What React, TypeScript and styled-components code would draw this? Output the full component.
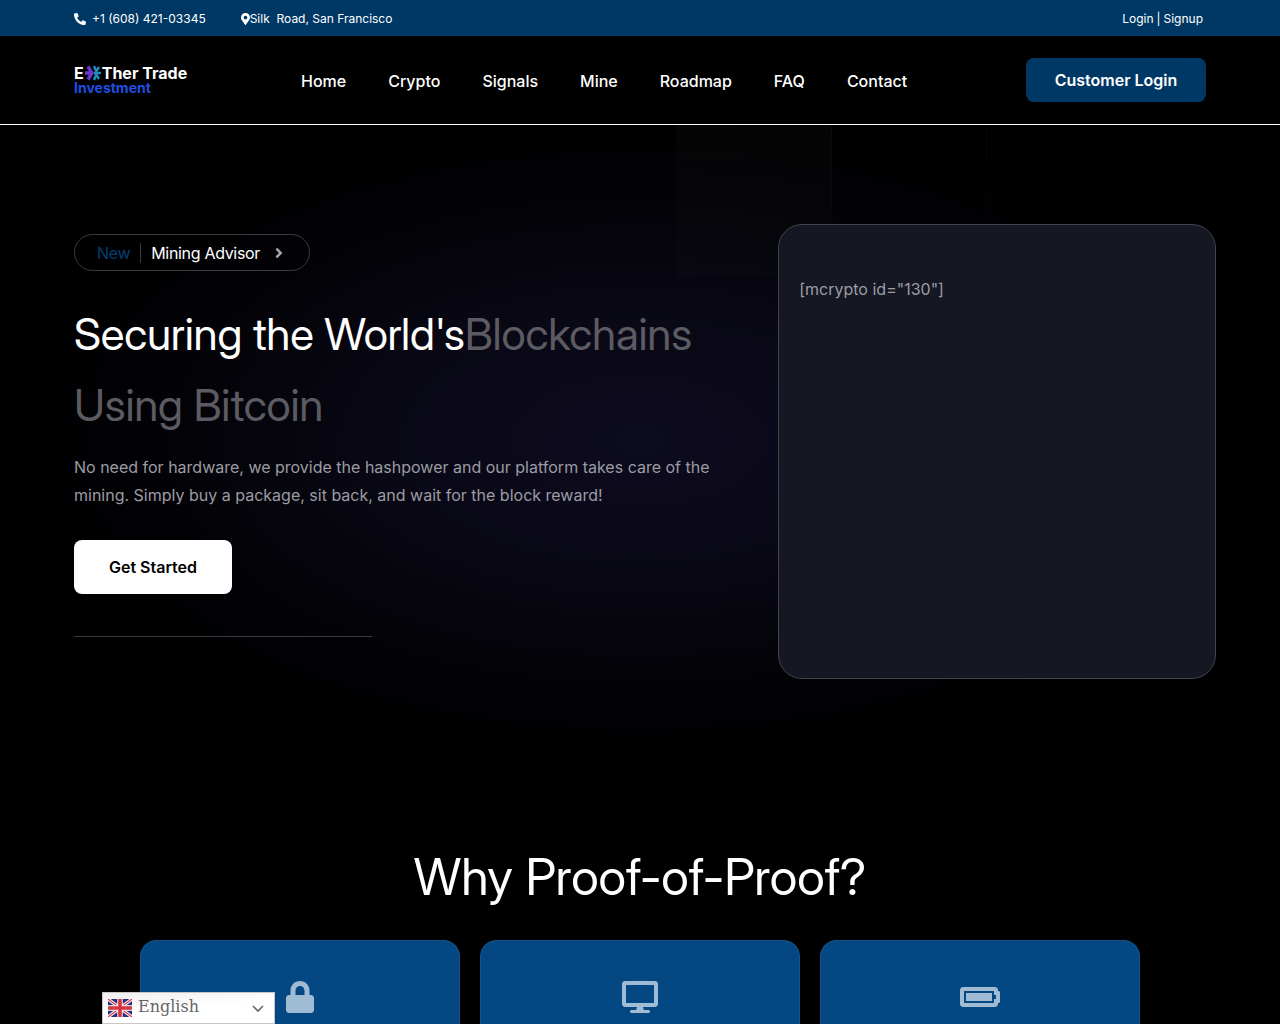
import React from "react";
import styled, { createGlobalStyle } from "styled-components";
import {
  FaAngleRight,
  FaBatteryFull,
  FaDesktop,
  FaLock,
  FaMapMarkerAlt,
  FaPhoneAlt,
} from "react-icons/fa";

const GlobalStyle = createGlobalStyle`
  *, *::before, *::after { box-sizing: border-box; }
  body {
    margin: 0;
    background: #000;
    color: #fff;
    font-family: Inter, "Liberation Sans", sans-serif;
    font-size: 16px;
  }
  h1, h2, p, ul { margin: 0; padding: 0; font-weight: 400; }
  a { color: inherit; text-decoration: none; }
`;

const TopBar = styled.div`
  display: flex;
  align-items: center;
  gap: 35px;
  height: 36px;
  padding: 2px 77px 0 74px;
  background: #003865;
  font-size: 12px;
  line-height: 20px;
`;

const ContactItem = styled.a<{ $gap: number; $icon: number }>`
  display: flex;
  align-items: center;
  gap: ${(p) => p.$gap}px;
  white-space: pre;

  svg {
    width: ${(p) => p.$icon}px;
    height: 12px;
  }
`;

const Account = styled.div`
  display: flex;
  gap: 3px;
  margin-left: auto;
`;

const Header = styled.header`
  display: flex;
  align-items: center;
  height: 89px;
  padding: 0 74px;
  border-bottom: 1px solid #fff;
`;

const Brand = styled.a`
  display: block;
  flex: 0 0 227px;
  font-weight: 700;
  color: #fff;
`;

const BrandName = styled.span`
  display: flex;
  align-items: center;
  font-size: 16px;
  line-height: 16px;
`;

const BrandSub = styled.span`
  display: block;
  color: #1f4fe0;
  font-size: 14px;
  line-height: 14px;
`;

const Menu = styled.ul`
  display: flex;
  gap: 42px;
  padding-top: 2px;
  list-style: none;
  font-weight: 500;
  line-height: 20px;
`;

const LoginButton = styled.button`
  width: 180px;
  height: 44px;
  margin-left: auto;
  border: 0;
  border-radius: 8px;
  background: #003865;
  color: #fff;
  font: 600 16px/20px Inter, sans-serif;
`;

const Hero = styled.section`
  display: grid;
  grid-template-columns: 62fr 38fr;
  align-items: start;
  padding: 99px 5% 151px;
  background:
    linear-gradient(#ffffff0a, #ffffff04) 831px 0 / 1px 152px no-repeat,
    linear-gradient(#ffffff06, #ffffff02) 986px 0 / 1px 152px no-repeat,
    linear-gradient(#ffffff04, #ffffff02) 676px 0 / 155px 152px no-repeat,
    radial-gradient(ellipse 640px 330px at 50% 315px, #0d0b1f 0%, #090815 38%, #030308 70%, #000 100%);
`;

const Intro = styled.div`
  display: flex;
  flex-direction: column;
  align-items: flex-start;
  padding: 10px 10px 0;
`;

const Pill = styled.a`
  display: flex;
  align-items: center;
  height: 37px;
  padding: 0 22px;
  border: 1px solid #3a3a3d;
  border-radius: 20px;
  letter-spacing: -0.02em;
`;

const PillTag = styled.span`
  padding-right: 10px;
  border-right: 1px solid #3a3a3d;
  margin-right: 10px;
  color: #003f72;
`;

const Arrow = styled(FaAngleRight)`
  margin-left: 11px;
  color: #a5a5ab;
`;

const Title = styled.h1`
  margin-top: 28px;
  font-family: "Inter Display", Inter, sans-serif;
  font-size: 44px;
  font-variation-settings: "opsz" 32;
  line-height: 71px;
  letter-spacing: -0.005em;
`;

const Muted = styled.span`
  color: #5c5b61;
`;

const Lead = styled.p`
  margin-top: 12px;
  color: #9c9ca3;
  line-height: 28px;
`;

const StartButton = styled.button`
  width: 158px;
  height: 54px;
  margin-top: 31px;
  border: 0;
  border-radius: 8px;
  background: #fff;
  color: #000;
  font: 600 16px/20px Inter, sans-serif;
`;

const Divider = styled.hr`
  width: 298px;
  margin: 42px 0 0;
  border: 0;
  border-top: 1px solid #3a3a3e;
`;

const Panel = styled.aside`
  min-height: 455px;
  padding: 50px 20px;
  border: 1px solid #42434b;
  border-radius: 24px;
  background: #151722;
  color: #9c9da4;
  line-height: 28px;
`;

const Why = styled.section`
  height: 194px;
  padding: 18px 10px 0;
  overflow: hidden;
`;

const WhyTitle = styled.h2`
  font-family: "Inter Display", Inter, sans-serif;
  font-size: 50px;
  font-variation-settings: "opsz" 32;
  line-height: 58px;
  text-align: center;
`;

const Cards = styled.div`
  display: grid;
  grid-template-columns: repeat(3, 1fr);
  gap: 20px;
  max-width: 1000px;
  margin: 34px auto 0;
`;

const Card = styled.article<{ $icon: number }>`
  display: flex;
  align-items: flex-start;
  justify-content: center;
  min-height: 280px;
  padding: 40px 20px;
  border: 1px solid #165389;
  border-radius: 16px;
  background: #034783;
  color: #a0bbd4;

  svg {
    width: ${(p) => p.$icon}px;
    height: 32px;
  }
`;

const Translator = styled.label`
  position: fixed;
  left: 102px;
  bottom: 0;
  display: block;
`;

const Language = styled.select`
  display: block;
  width: 173px;
  height: 32px;
  padding: 0 0 2px 35px;
  border: 1px solid #c6c6c6;
  border-radius: 0;
  appearance: none;
  background: linear-gradient(175deg, #efefef, #fff 50%);
  color: #666;
  font: 16px/20px "DejaVu Serif", serif;
`;

const Flag = styled.svg`
  position: absolute;
  left: 6px;
  top: 7px;
`;

const Chevron = styled.svg`
  position: absolute;
  right: 11px;
  top: 13px;
`;

const links = ["Home", "Crypto", "Signals", "Mine", "Roadmap", "FAQ", "Contact"];

function BrandMark() {
  return (
    <svg width="18" height="16" viewBox="0 0 18 16" fill="none">
      <path d="M1 8h7M4 1.500 8 8l-4 6.500" stroke="#6b35cf" strokeWidth="3.400" />
      <path d="M17 8h-5M10 1l1.500 4M10 15l1.500-4M15 2l-4 6 4 6" stroke="#208fbd" strokeWidth="2.400" />
    </svg>
  );
}

export default function App() {
  return (
    <>
      <GlobalStyle />
      <TopBar>
        <ContactItem href="#phone" $gap={6} $icon={12}>
          <FaPhoneAlt />
          +1 (608) 421-03345
        </ContactItem>
        <ContactItem href="#map" $gap={0} $icon={9}>
          <FaMapMarkerAlt />
          {"Silk  Road, San Francisco"}
        </ContactItem>
        <Account>
          <a href="#login">Login</a>|<a href="#signup">Signup</a>
        </Account>
      </TopBar>
      <Header>
        <Brand href="#home">
          <BrandName>
            E<BrandMark />Ther Trade
          </BrandName>
          <BrandSub>Investment</BrandSub>
        </Brand>
        <nav>
          <Menu>
            {links.map((name) => (
              <li key={name}>
                <a href={`#${name.toLowerCase()}`}>{name}</a>
              </li>
            ))}
          </Menu>
        </nav>
        <LoginButton>Customer Login</LoginButton>
      </Header>
      <main>
        <Hero>
          <Intro>
            <Pill href="#advisor">
              <PillTag>New</PillTag>
              Mining Advisor
              <Arrow />
            </Pill>
            <Title>
              Securing the World's<Muted>Blockchains Using Bitcoin</Muted>
            </Title>
            <Lead>
              No need for hardware, we provide the hashpower and our platform takes care of the
              mining. Simply buy a package, sit back, and wait for the block reward!
            </Lead>
            <StartButton>Get Started</StartButton>
            <Divider />
          </Intro>
          <Panel>[mcrypto id="130"]</Panel>
        </Hero>
        <Why>
          <WhyTitle>Why Proof-of-Proof?</WhyTitle>
          <Cards>
            <Card $icon={28}>
              <FaLock />
            </Card>
            <Card $icon={36}>
              <FaDesktop />
            </Card>
            <Card $icon={40}>
              <FaBatteryFull />
            </Card>
          </Cards>
        </Why>
      </main>
      <Translator>
        <Language aria-label="Language" defaultValue="English">
          <option>English</option>
        </Language>
        <Flag width="24" height="18" viewBox="0 0 24 18">
          <path fill="#2b2f7d" d="M0 0h24v18H0z" />
          <path d="M0 0l24 18M24 0L0 18" stroke="#fff" strokeWidth="3.2" />
          <path d="M0 0l24 18M24 0L0 18" stroke="#d8343f" strokeWidth="1.2" />
          <path d="M12 0v18M0 9h24" stroke="#fff" strokeWidth="5.4" />
          <path d="M12 0v18M0 9h24" stroke="#d8343f" strokeWidth="3.6" />
        </Flag>
        <Chevron width="12" height="8" viewBox="0 0 12 8" fill="none">
          <path d="M1 1l5 5 5-5" stroke="#666" strokeWidth="1.6" />
        </Chevron>
      </Translator>
    </>
  );
}
